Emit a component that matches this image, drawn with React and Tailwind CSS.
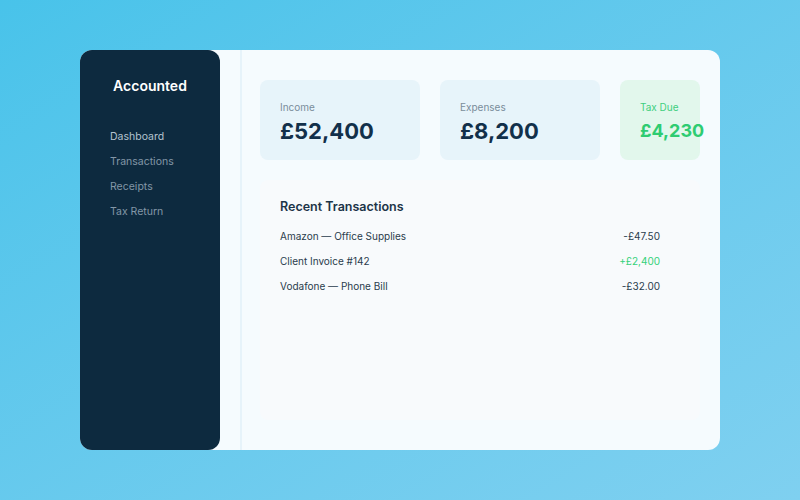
export default function App() {
  const txns = [
    { name: "Amazon — Office Supplies", amount: "-£47.50", positive: false },
    { name: "Client Invoice #142", amount: "+£2,400", positive: true },
    { name: "Vodafone — Phone Bill", amount: "-£32.00", positive: false },
  ];

  return (
    <div
      className="w-[800px] h-[500px] bg-gradient-to-br from-[#48c3ea] to-[#7fd0f0] flex items-center justify-center"
      style={{ fontFamily: "Inter, 'Liberation Sans', sans-serif" }}
    >
      <div className="w-[640px] h-[400px] bg-[#f5fbfe] rounded-xl flex">
        {/* Sidebar */}
        <div className="w-[140px] h-full bg-[#0d2a3f] rounded-xl flex flex-col">
          <div className="text-white text-[14px] font-semibold text-center mt-[27px] leading-[18px]">Accounted</div>
          <nav className="flex flex-col mt-[34px] pl-[30px] gap-[10px] text-[10.5px] leading-[15px]">
            <span className="text-[#b4c3cf]">Dashboard</span>
            <span className="text-[#8397a7]">Transactions</span>
            <span className="text-[#8397a7]">Receipts</span>
            <span className="text-[#8397a7]">Tax Return</span>
          </nav>
        </div>

        {/* Main */}
        <div className="ml-[20px] border-l-2 border-[#e6f3fa] flex-1 pl-[18px] pr-[20px] pt-[30px] flex flex-col">
          <div className="flex gap-[20px]">
            <div className="w-[160px] h-[80px] shrink-0 rounded-lg bg-[#e7f4fa] pl-[20px] pt-[21px]">
              <div className="text-[10px] leading-[13px] text-[#7a8d9b]">Income</div>
              <div className="text-[22px] leading-[26px] font-bold text-[#12304a] mt-[4px]">£52,400</div>
            </div>
            <div className="w-[160px] h-[80px] shrink-0 rounded-lg bg-[#e7f4fa] pl-[20px] pt-[21px]">
              <div className="text-[10px] leading-[13px] text-[#7a8d9b]">Expenses</div>
              <div className="text-[22px] leading-[26px] font-bold text-[#12304a] mt-[4px]">£8,200</div>
            </div>
            <div className="w-[80px] h-[80px] shrink-0 rounded-lg bg-[#e2f7ec] pl-[20px] pt-[21px] whitespace-nowrap">
              <div className="text-[10px] leading-[13px] text-[#3fcf7e]">Tax Due</div>
              <div className="text-[18px] leading-[26px] font-bold text-[#2ecc71] mt-[4px]">£4,230</div>
            </div>
          </div>

          <div className="mt-[20px] h-[240px] rounded-lg bg-[#f8fafc] pl-[20px] pr-[40px] pt-[19px]">
            <div className="text-[12.5px] leading-[16px] font-semibold text-[#1c3448]">Recent Transactions</div>
            <div className="flex flex-col mt-[9px]">
              {txns.map((t) => (
                <div key={t.name} className="flex justify-between h-[25px] items-center text-[10px] text-[#2a3c4c]">
                  <span>{t.name}</span>
                  <span className={t.positive ? "text-[#34d17a]" : "text-[#2a3c4c]"}>{t.amount}</span>
                </div>
              ))}
            </div>
          </div>
        </div>
      </div>
    </div>
  );
}
